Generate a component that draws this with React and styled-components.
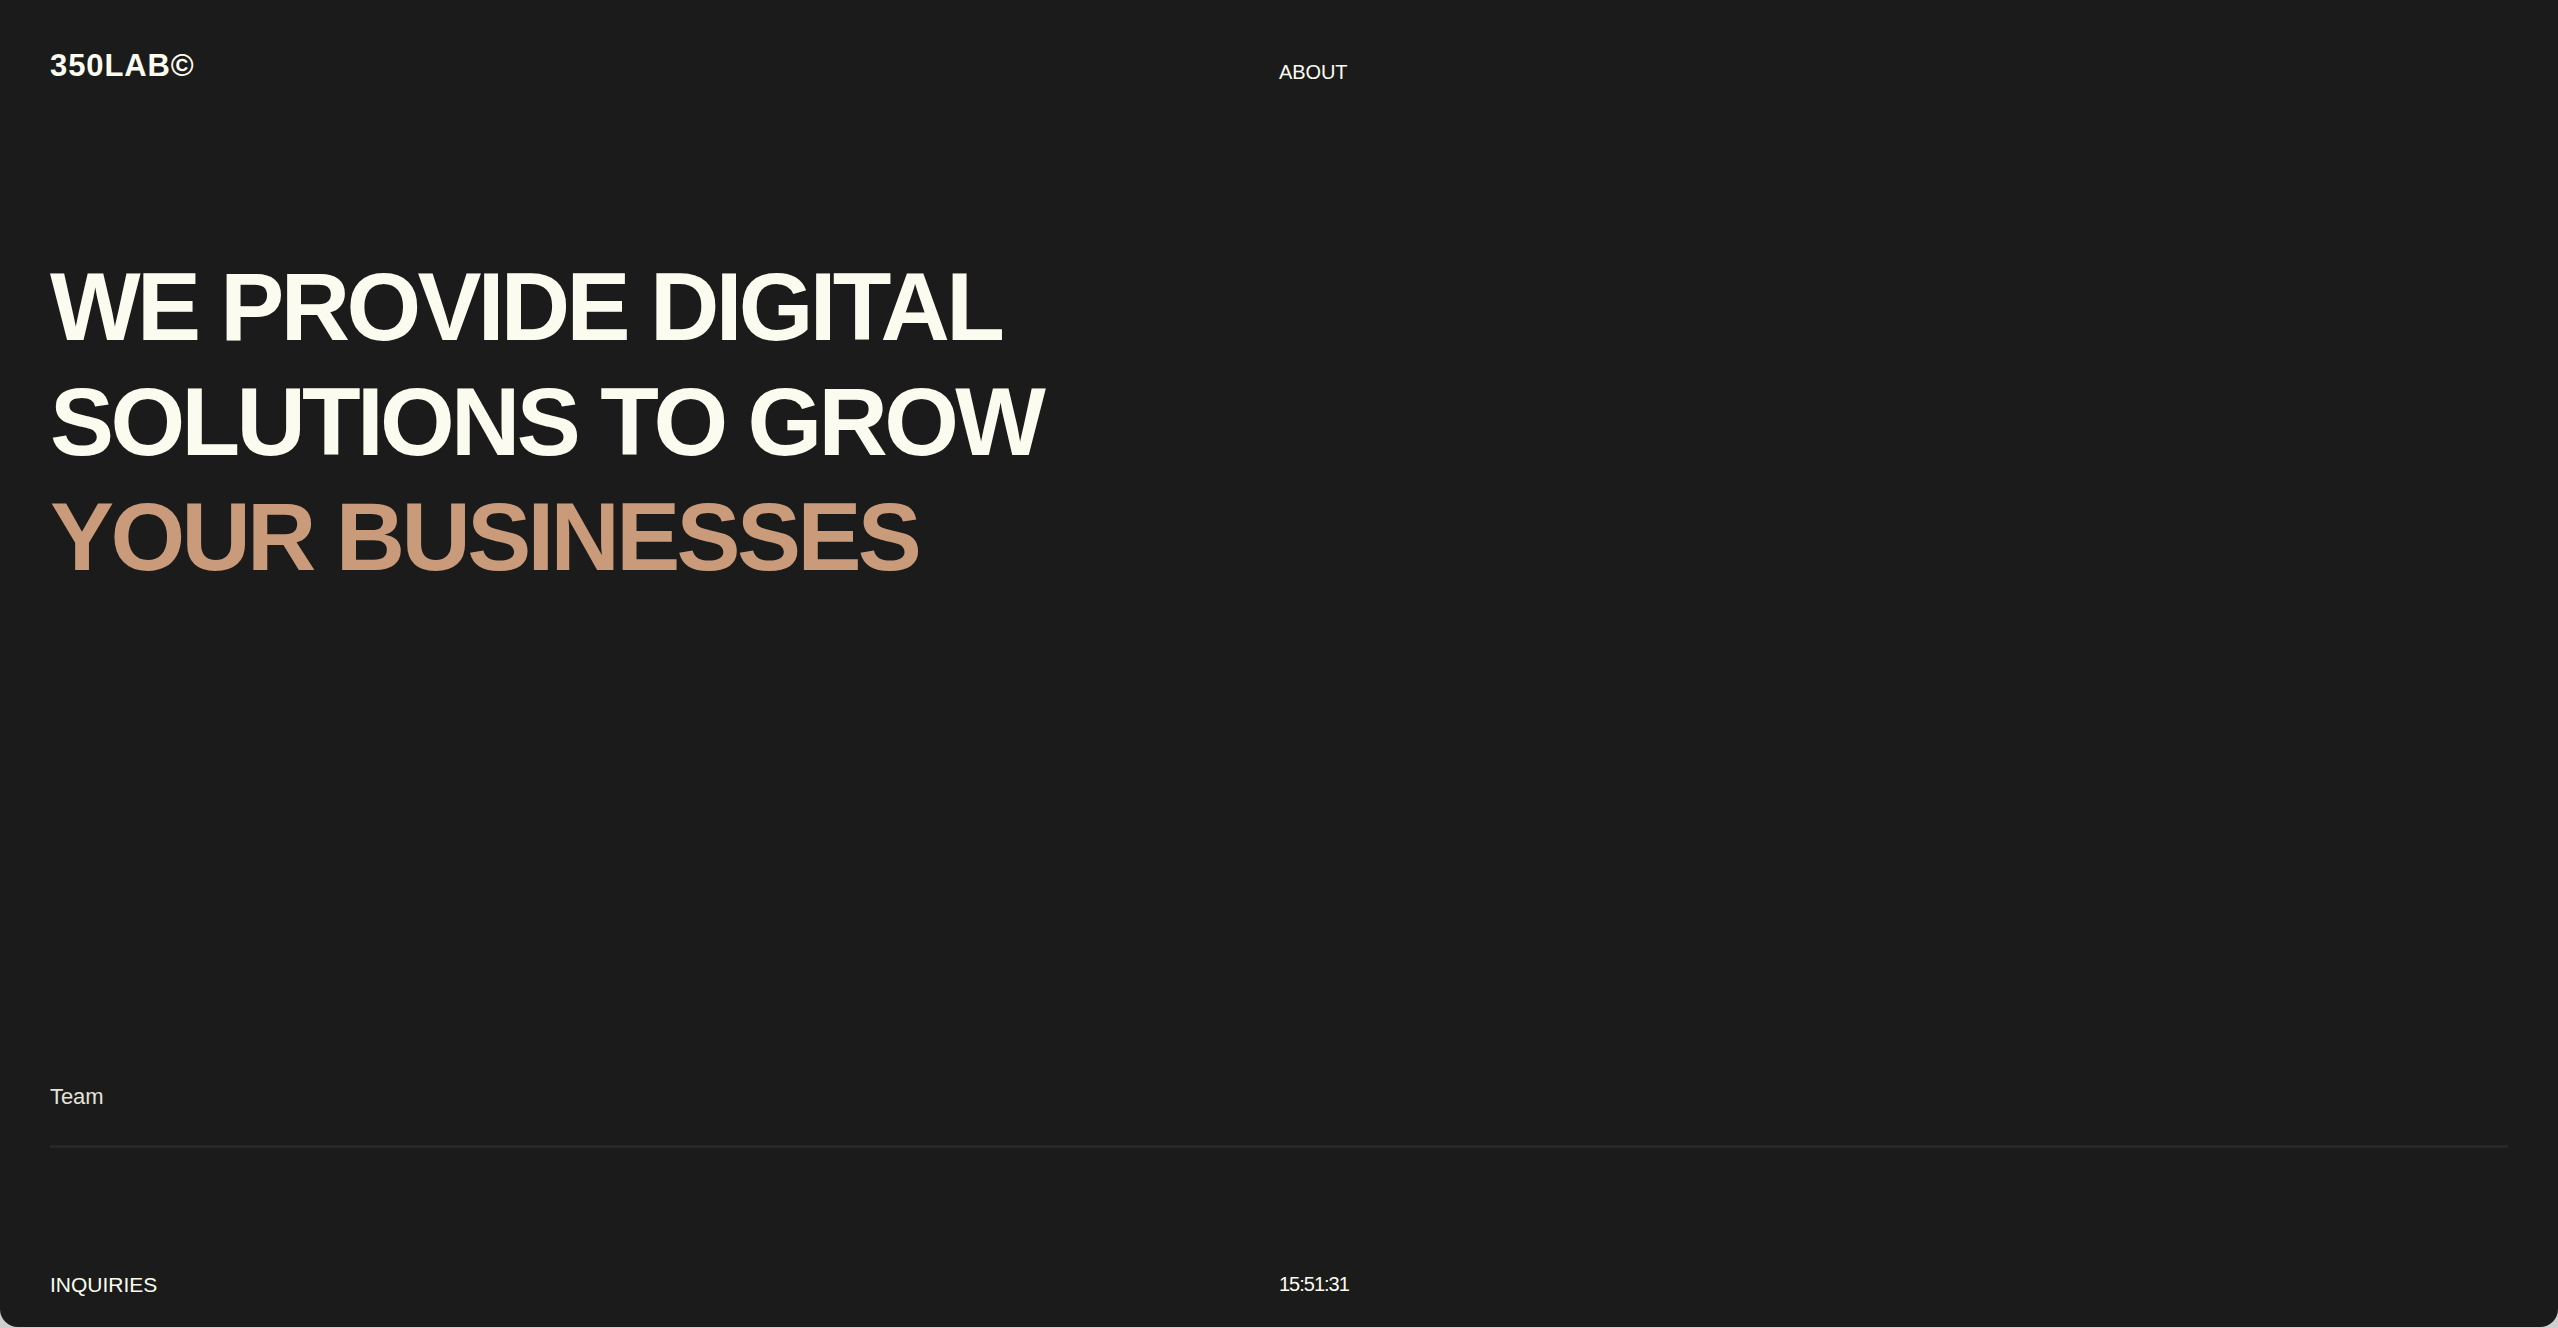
import React from "react";
import styled, { createGlobalStyle } from "styled-components";

const GlobalStyle = createGlobalStyle`
  html, body {
    margin: 0;
    padding: 0;
    background: #cfcfcf;
  }
  body {
    font-family: "Liberation Sans", Arial, sans-serif;
    -webkit-font-smoothing: antialiased;
  }
  * { box-sizing: border-box; }
`;

const Panel = styled.div`
  height: 1327px;
  background: #1b1b1b;
  color: #fcfbef;
  border-radius: 0 0 18px 18px;
  padding: 0 50px 30px;
  display: flex;
  flex-direction: column;
  overflow: hidden;
`;

const Header = styled.header`
  display: grid;
  grid-template-columns: 1fr 1fr;
  padding-top: 48px;
`;

const Logo = styled.div`
  font-size: 31px;
  line-height: 36px;
  font-weight: 700;
  letter-spacing: 0.9px;
`;

const NavLink = styled.a`
  justify-self: start;
  padding-top: 6px;
  font-size: 20px;
  line-height: 36px;
  color: #fcfbef;
  text-decoration: none;
  letter-spacing: -0.1px;
`;

const Hero = styled.main`
  flex: 1;
  padding-top: 159px;
`;

const Headline = styled.h1`
  margin: 0;
  font-size: 96px;
  line-height: 1.2;
  font-weight: 700;
  letter-spacing: -0.038em;
  text-transform: uppercase;
`;

const Line = styled.span`
  display: block;
  white-space: nowrap;
  color: ${(p) => (p.$accent ? "#c99b7b" : "#fcfbef")};
`;

const TeamRow = styled.div`
  padding-bottom: 34px;
  border-bottom: 3px solid #272727;
  font-size: 22px;
  line-height: 1.2;
  color: #e4e3d9;
  letter-spacing: -0.1px;
`;

const Footer = styled.footer`
  display: grid;
  grid-template-columns: 1fr 1fr;
  margin-top: 124px;
  font-size: 21px;
  line-height: 1.2;
`;

const FooterLink = styled.a`
  justify-self: start;
  color: #fcfbef;
  text-decoration: none;
`;

const Clock = styled.span`
  justify-self: start;
  font-size: 20px;
  letter-spacing: -1px;
`;

export default function App() {
  return (
    <>
      <GlobalStyle />
      <Panel>
        <Header>
          <Logo>350LAB©</Logo>
          <NavLink href="#about">ABOUT</NavLink>
        </Header>
        <Hero>
          <Headline>
            <Line>We provide digital</Line>
            <Line>solutions to grow</Line>
            <Line $accent>your businesses</Line>
          </Headline>
        </Hero>
        <TeamRow>Team</TeamRow>
        <Footer>
          <FooterLink href="#inquiries">INQUIRIES</FooterLink>
          <Clock>15:51:31</Clock>
        </Footer>
      </Panel>
    </>
  );
}
